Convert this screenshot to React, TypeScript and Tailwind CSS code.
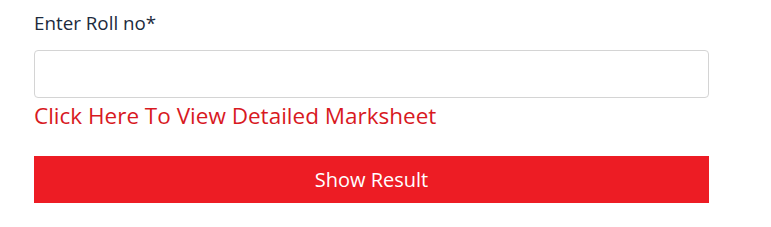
import React from "react";

export default function App(): React.ReactElement {
  const [roll, setRoll] = React.useState("");

  return (
    <div className="min-h-[227px] bg-white px-[34px] pt-[10px]" style={{ fontFamily: '"Open Sans", sans-serif' }}>
      <div className="w-[675px]">
        <label className="block text-[18.8px] font-medium leading-[26px] text-[#1c2a3d]">Enter Roll no*</label>
        <input
          className="mt-[14px] block h-[48px] w-full rounded-[4px] border border-[#d4d4d4] px-3 text-[16px] outline-none"
          type="text"
          value={roll}
          onChange={(e) => setRoll(e.target.value)}
        />
        <a href="#" className="mt-[3px] block text-[22.5px] leading-[30px] text-[#d8191f]">
          Click Here To View Detailed Marksheet
        </a>
        <button
          type="button"
          className="mt-[25px] block h-[47px] w-full bg-[#ed1c24] text-[20px] text-white"
        >
          Show Result
        </button>
      </div>
    </div>
  );
}
